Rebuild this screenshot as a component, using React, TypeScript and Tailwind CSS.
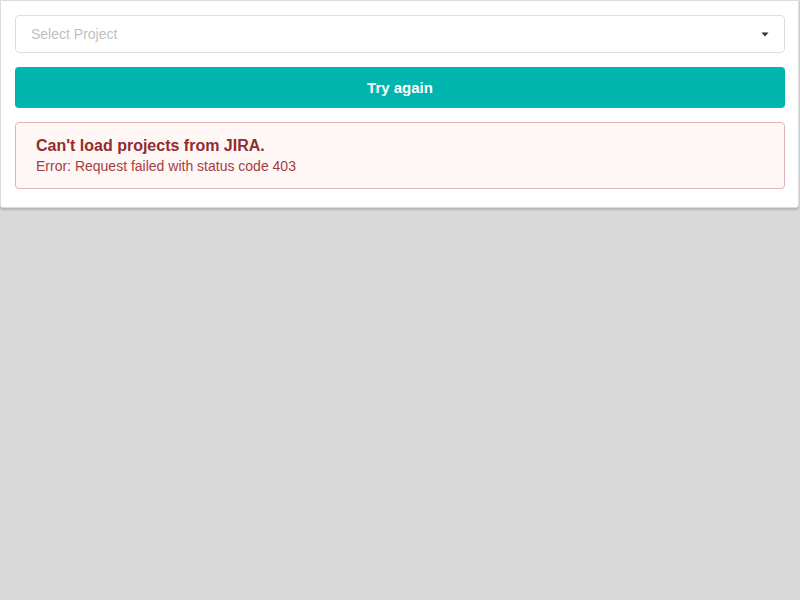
export default function App() {
  return (
    <div
      className="min-h-[600px] w-[800px] bg-[#d9d9d9]"
      style={{ fontFamily: '"Liberation Sans", Arial, Helvetica, sans-serif' }}
    >
      <div className="w-[799px] rounded-b-[3px] border border-[#dcdcdc] bg-white px-[14px] pt-[14px] pb-[18px] shadow-[0_2px_2px_0_rgba(34,36,38,0.2)]">
        <div className="flex h-[38px] w-[770px] items-center justify-between rounded-[4px] border border-[#dedede] bg-white pr-[15px] pl-[15px]">
          <span className="text-[14px] text-[#bfbfbf]">Select Project</span>
          <svg width="8" height="5" viewBox="0 0 8 5" className="mt-[1px]">
            <path d="M0.5 0.5 H7.5 L4 4.5 Z" fill="#333" />
          </svg>
        </div>
        <button className="mt-[14px] flex h-[41px] w-[770px] items-center justify-center rounded-[4px] bg-[#00b5ad] pt-[2px] text-[15px] font-bold text-white">
          Try again
        </button>
        <div className="mt-[14px] flex h-[67px] w-[770px] flex-col justify-center rounded-[4px] border border-[#e0b4b4] bg-[#fff6f6] pl-[20px]">
          <div className="text-[16px] leading-[20px] font-bold text-[#912d2b]">
            Can't load projects from JIRA.
          </div>
          <div className="text-[14px] leading-[20px] text-[#a3413f]">
            Error: Request failed with status code 403
          </div>
        </div>
      </div>
    </div>
  );
}
